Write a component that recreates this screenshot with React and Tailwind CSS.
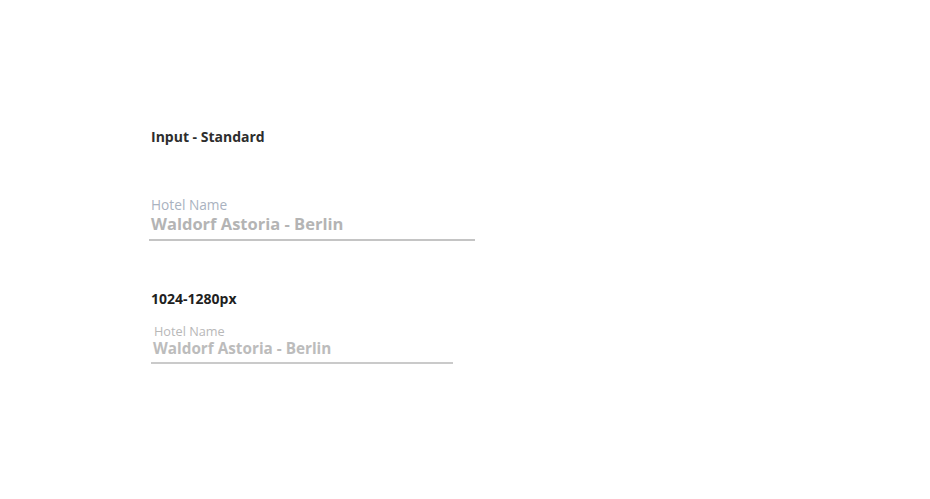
import React from "react";

const Field = ({ label, value, width, labelClass, valueClass, lineClass }) => (
  <div className={width}>
    <div className={labelClass}>{label}</div>
    <div className={valueClass}>{value}</div>
    <div className={lineClass}></div>
  </div>
);

const App = () => {
  return (
    <div className="w-[930px] h-[499px] bg-white font-['Open_Sans',sans-serif] pl-[151px] pt-[127px]">
      <h3 className="text-[14px] leading-[20px] font-bold text-[#2d2d2d]">Input - Standard</h3>

      <div className="mt-[49px] -ml-[2px]">
        <Field
          label="Hotel Name"
          value="Waldorf Astoria - Berlin"
          width="w-[326px]"
          labelClass="pl-[2px] text-[13.7px] leading-[17px] text-[#a9b2c0]"
          valueClass="pl-[2px] text-[16.5px] leading-[22px] font-bold text-[#b4b4b4]"
          lineClass="mt-[4px] h-[2px] bg-[#c4c4c4]"
        />
      </div>

      <h3 className="mt-[48px] text-[14px] leading-[20px] font-bold text-[#1f1f1f]">1024-1280px</h3>

      <div className="mt-[15px]">
        <Field
          label="Hotel Name"
          value="Waldorf Astoria - Berlin"
          width="w-[302px]"
          labelClass="pl-[3px] text-[12.7px] leading-[15px] text-[#b8b8b8]"
          valueClass="pl-[2px] text-[15.3px] leading-[19px] font-bold text-[#bcbcbc]"
          lineClass="mt-[4px] h-[2px] bg-[#cacaca]"
        />
      </div>
    </div>
  );
};

export default App;
